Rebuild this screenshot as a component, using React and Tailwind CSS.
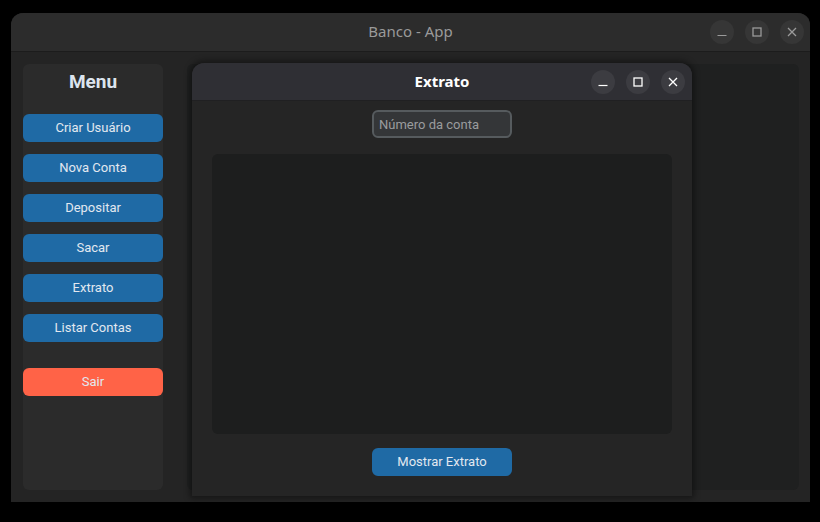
import { useState } from 'react'

const menuItems = ['Criar Usuário', 'Nova Conta', 'Depositar', 'Sacar', 'Extrato', 'Listar Contas']

// Window control buttons (minimize / maximize / close)
function WinButtons({ dim = false }) {
  const stroke = dim ? '#9a9a9a' : '#ffffff'
  const bg = dim ? 'bg-[#363636]' : 'bg-[#3c3c41]'
  return (
    <div className="flex items-center gap-[11px]">
      <div className={`w-6 h-6 rounded-full ${bg} flex items-center justify-center`}>
        <svg width="10" height="10" viewBox="0 0 10 10">
          <line x1="0.5" y1="8.5" x2="9.5" y2="8.5" stroke={stroke} strokeWidth="1.2" />
        </svg>
      </div>
      <div className={`w-6 h-6 rounded-full ${bg} flex items-center justify-center`}>
        <svg width="10" height="10" viewBox="0 0 10 10">
          <rect x="1" y="1" width="8" height="8" fill="none" stroke={stroke} strokeWidth="1.3" />
        </svg>
      </div>
      <div className={`w-6 h-6 rounded-full ${bg} flex items-center justify-center`}>
        <svg width="10" height="10" viewBox="0 0 10 10">
          <path d="M1 1 L9 9 M9 1 L1 9" stroke={stroke} strokeWidth="1.3" />
        </svg>
      </div>
    </div>
  )
}

function Sidebar() {
  return (
    <div className="w-[140px] h-full rounded-md bg-[#2b2b2b] flex flex-col">
      <div className="h-[36px] flex items-center justify-center text-[19px] font-bold text-[#dce4ee]">
        Menu
      </div>
      <div className="mt-[14px] flex flex-col gap-3">
        {menuItems.map((item) => (
          <button
            key={item}
            className="h-7 w-full rounded-md bg-[#1f6aa5] text-[13px] text-[#e2e8f0]"
          >
            {item}
          </button>
        ))}
      </div>
      <button className="mt-[26px] h-7 w-full rounded-md bg-[#ff6347] text-[13px] text-[#e2e8f0]">
        Sair
      </button>
    </div>
  )
}

function ExtratoDialog() {
  const [conta, setConta] = useState('')
  return (
    <div className="absolute left-[192px] top-[63px] w-[500px] h-[433px] rounded-t-[12px] bg-[#252525] shadow-[0_0_6px_2px_rgba(0,0,0,0.45)] flex flex-col">
      <div className="relative h-[38px] rounded-t-[12px] bg-[#2f2f34] border-b border-[#202022] flex items-center justify-center">
        <span className="text-[15px] font-bold text-white font-['Noto_Sans',sans-serif]">Extrato</span>
        <div className="absolute right-[7px] top-[7px]">
          <WinButtons />
        </div>
      </div>
      <div className="flex flex-col items-center">
        <input
          value={conta}
          onChange={(e) => setConta(e.target.value)}
          placeholder="Número da conta"
          className="mt-[9px] w-[140px] h-7 rounded-md border-2 border-[#565b5e] bg-[#343638] px-[5px] text-[13px] text-[#dce4ee] placeholder:text-[#9a9c9e] outline-none"
        />
        <div className="mt-4 w-[460px] h-[280px] rounded-md bg-[#1d1e1e]" />
        <button className="mt-[14px] w-[140px] h-7 rounded-md bg-[#1f6aa5] text-[13px] text-[#e2e8f0]">
          Mostrar Extrato
        </button>
      </div>
    </div>
  )
}

export default function App() {
  return (
    <div className="relative w-[820px] h-[522px] bg-black pt-[13px] pl-[11px] font-['Roboto',sans-serif]">
      <div className="w-[799px] h-[489px] rounded-t-[12px] bg-[#242424] flex flex-col overflow-hidden">
        <div className="relative h-[39px] shrink-0 bg-[#2c2c2c] border-b border-[#1c1c1c] flex items-center justify-center">
          <span className="-mt-[2px] text-[15px] text-[#9a9a9a] font-['Noto_Sans',sans-serif]">Banco - App</span>
          <div className="absolute right-[6px] top-[7px]">
            <WinButtons dim />
          </div>
        </div>
        <div className="flex-1 flex p-3 pr-[11px]">
          <Sidebar />
          <div className="ml-6 flex-1 rounded-md bg-[#1f2020]" />
        </div>
      </div>
      <ExtratoDialog />
    </div>
  )
}
